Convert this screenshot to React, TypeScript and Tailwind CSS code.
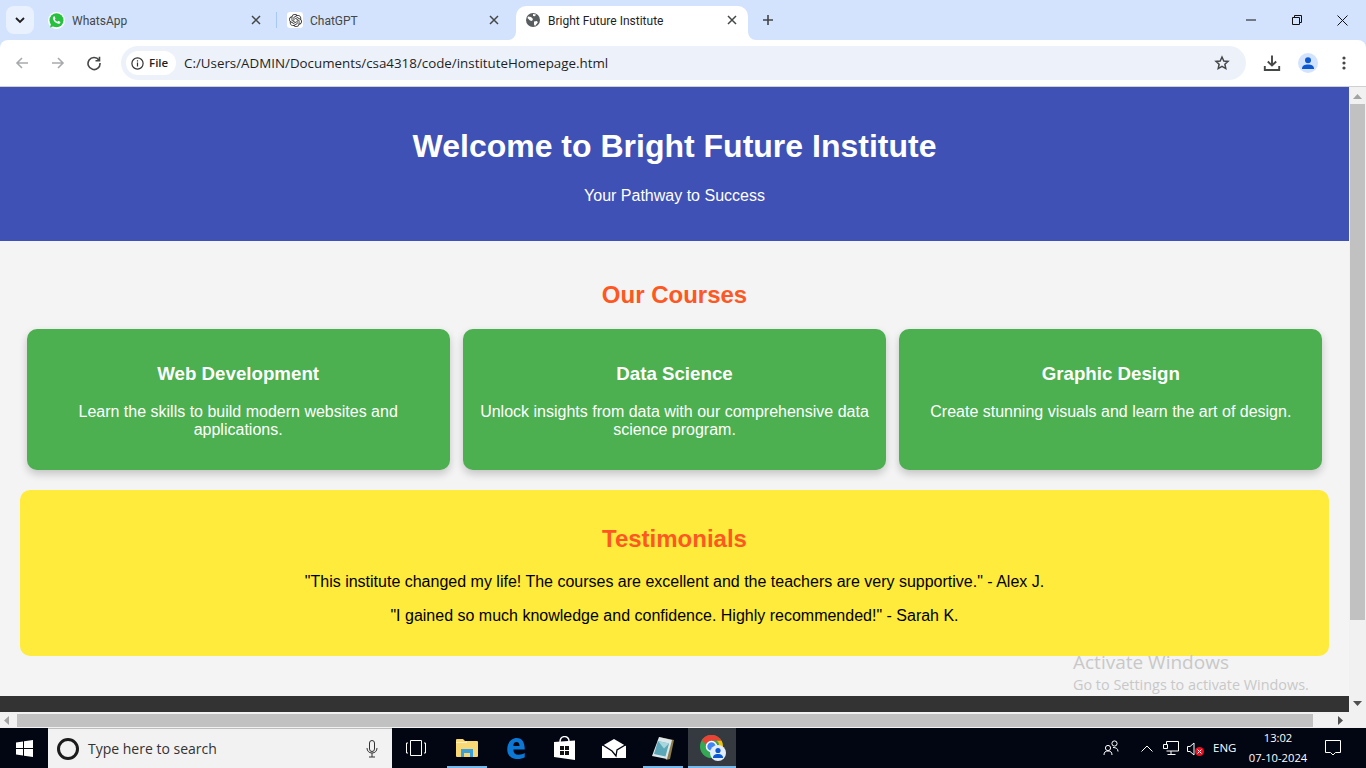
import React from "react";
import { SiOpenai } from "react-icons/si";

const ui = "font-['Open_Sans','Noto_Sans',sans-serif]";
const chrome = "font-['Roboto','Noto_Sans',sans-serif]";

function X({ className = "" }: { className?: string }) {
  return (
    <svg width="10" height="10" viewBox="0 0 10 10" className={className}>
      <path d="M1 1l8 8M9 1l-8 8" stroke="#444746" strokeWidth="1.5" fill="none" />
    </svg>
  );
}

function TabBar() {
  return (
    <div className={`flex h-10 shrink-0 bg-[#d3e3fd] pt-1.5 ${chrome}`}>
      <div className="ml-[6px] flex h-[28px] w-[28px] items-center justify-center rounded-lg bg-[#e9f1fe]">
        <svg width="10" height="7" viewBox="0 0 10 7"><path d="M1 1l4 4 4-4" stroke="#1f1f1f" strokeWidth="1.8" fill="none" /></svg>
      </div>
      <div className="ml-[14px] flex h-7 w-[214px] items-center">
        <svg width="17" height="17" viewBox="0 0 17 17">
          <circle cx="8.500" cy="8.500" r="8.500" fill="#fff" />
          <circle cx="8.500" cy="8.300" r="7" fill="#25c13f" />
          <path d="M2 15.500l1.200-4.500 3 3z" fill="#25c13f" />
          <path d="M6 4.300c.4 0 .6 0 .8.500l.6 1.400c.1.200 0 .4-.1.500l-.5.700c.6 1.100 1.500 1.900 2.600 2.400l.7-.7c.2-.2.4-.2.6-.1l1.400.7c.3.2.4.4.3.700-.2 1-1.100 1.500-2 1.400-2.800-.4-5-2.600-5.500-5.200-.1-.9.300-1.800 1.100-2.300z" fill="#fff" />
        </svg>
        <span className="ml-[7px] mt-px text-[12px] text-[#444746]">WhatsApp</span>
        <X className="ml-auto mr-[1px]" />
      </div>
      <div className="ml-[14px] mt-1.5 h-4 w-px bg-[#a8c7fa]" />
      <div className="ml-[10px] flex h-7 w-[213px] items-center">
        <div className="flex h-4 w-4 items-center justify-center rounded-[3px] bg-white">
          <SiOpenai className="text-[#333]" size={13} />
        </div>
        <span className="ml-[7px] mt-px text-[12px] text-[#444746]">ChatGPT</span>
        <X className="ml-auto mr-[1px]" />
      </div>
      <div className="relative ml-[16px] flex h-[34px] w-[232px] items-center rounded-t-[10px] bg-white pb-1.5 pl-[9px] pr-[11px]">
        <svg width="8" height="8" viewBox="0 0 8 8" className="absolute bottom-0 left-[-8px]"><path d="M8 0v8H0a8 8 0 0 0 8-8z" fill="#fff" /></svg>
        <svg width="8" height="8" viewBox="0 0 8 8" className="absolute bottom-0 right-[-8px]"><path d="M0 0v8h8a8 8 0 0 1-8-8z" fill="#fff" /></svg>
        <svg width="14" height="14" viewBox="0 0 14 14" className="ml-px">
          <circle cx="7" cy="7" r="7" fill="#5a5d60" />
          <path d="M2 3.500l3 .5 2 2-1 2-2-.5-2.500-2.500zM8 8.500l3-.5.800 1.500L9 13l-1-1.500zM7 1l3 .5-1 1.800L7 3z" fill="#fff" />
        </svg>
        <span className="ml-2 mt-px text-[12px] text-[#1f1f1f]">Bright Future Institute</span>
        <X className="ml-auto" />
      </div>
      <svg width="12" height="12" viewBox="0 0 12 12" className="ml-[14px] mt-2"><path d="M6 1v10M1 6h10" stroke="#444" strokeWidth="1.600" /></svg>
      <div className="ml-auto flex h-7 items-center">
        <svg width="10" height="10" viewBox="0 0 10 10"><path d="M0 5h10" stroke="#111" strokeWidth="1" /></svg>
        <svg width="10" height="10" viewBox="0 0 10 10" className="ml-[36px]">
          <path d="M.5 2.500h7v7h-7zM2.500 2.500v-2h7v7h-2" stroke="#111" fill="none" />
        </svg>
        <svg width="11" height="11" viewBox="0 0 11 11" className="ml-[35px] mr-[18px]">
          <path d="M.5.500l10 10M10.500.500l-10 10" stroke="#111" fill="none" />
        </svg>
      </div>
    </div>
  );
}

function Toolbar() {
  return (
    <div className={`flex h-[47px] shrink-0 items-center rounded-t-[8px] border-b border-[#d0d0d0] bg-white ${ui}`}>
      <svg width="16" height="16" viewBox="0 0 16 16" className="ml-[14px]"><path d="M14 8H3M8 3L3 8l5 5" stroke="#a8abad" strokeWidth="1.600" fill="none" /></svg>
      <svg width="16" height="16" viewBox="0 0 16 16" className="ml-[20px]"><path d="M2 8h11M8 3l5 5-5 5" stroke="#a8abad" strokeWidth="1.600" fill="none" /></svg>
      <svg width="16" height="16" viewBox="0 0 16 16" className="ml-[20px]"><path d="M13 5.200A6 6 0 1 0 14 8M13.500 1.800v4h-4" stroke="#444746" strokeWidth="1.600" fill="none" /></svg>
      <div className="ml-[19px] flex h-[34px] w-[1125px] items-center rounded-full bg-[#edf2fa] pl-[5px]">
        <div className="flex h-6 w-[50px] items-center rounded-full bg-white pl-[5px]">
          <svg width="13" height="13" viewBox="0 0 13 13"><circle cx="6.500" cy="6.500" r="5.600" stroke="#333" strokeWidth="1.200" fill="none" /><path d="M6.500 5.600v4M6.500 3.200v1.300" stroke="#333" strokeWidth="1.200" /></svg>
          <span className="ml-[5px] text-[11.500px] font-semibold text-[#1f1f1f]">File</span>
        </div>
        <span className="ml-2 mt-px text-[13.350px] text-[#1f1f1f]">C:/Users/ADMIN/Documents/csa4318/code/instituteHomepage.html</span>
        <svg width="16" height="16" viewBox="0 0 24 24" className="ml-auto mr-4"><path d="M12 3l2.700 6 6.400.600-4.800 4.300 1.400 6.400L12 17l-5.700 3.300 1.400-6.400L2.900 9.600 9.300 9z" stroke="#444746" strokeWidth="2.200" fill="none" /></svg>
      </div>
      <svg width="18" height="18" viewBox="0 0 18 18" className="ml-[17px]"><path d="M9 1.500v10M4.800 7.500L9 11.500l4.200-4M1.800 12v4h14.400v-4" stroke="#444746" strokeWidth="1.900" fill="none" /></svg>
      <div className="ml-[17px] flex h-5 w-5 items-center justify-center rounded-full bg-[#d3e3fd]">
        <svg width="14" height="14" viewBox="0 0 14 14"><circle cx="7" cy="4.300" r="3" fill="#0b57d0" /><path d="M1 13c0-3.500 2.500-4.500 6-4.500s6 1 6 4.500z" fill="#0b57d0" /></svg>
      </div>
      <svg width="4" height="14" viewBox="0 0 4 14" className="ml-[24px]"><circle cx="2" cy="2" r="1.600" fill="#444746" /><circle cx="2" cy="7" r="1.600" fill="#444746" /><circle cx="2" cy="12" r="1.600" fill="#444746" /></svg>
    </div>
  );
}

const courses = [
  ["Web Development", "Learn the skills to build modern websites and applications."],
  ["Data Science", "Unlock insights from data with our comprehensive data science program."],
  ["Graphic Design", "Create stunning visuals and learn the art of design."],
];

function Page() {
  return (
    <div className="relative min-w-0 flex-1 overflow-hidden bg-[#f4f4f4] font-['Liberation_Sans',sans-serif] leading-[normal]">
      <header className="bg-[#3f51b5] p-5 text-center text-white">
        <h1 className="my-[21.44px] text-[32px] leading-[normal] font-bold">Welcome to Bright Future Institute</h1>
        <p className="my-4 text-[16px] leading-[normal]">Your Pathway to Success</p>
      </header>
      <section className="p-5">
        <h2 className="my-[19.92px] text-center text-[24px] leading-[normal] font-bold text-[#ff5722]">Our Courses</h2>
        <div className="flex justify-around">
          {courses.map(([t, d]) => (
            <div key={t} className="w-[423px] rounded-[10px] bg-[#4caf50] p-[15px] text-center text-white shadow-[0_4px_8px_rgba(0,0,0,0.2)]">
              <h3 className="mt-[19.2px] mb-[18.24px] text-[18.72px] leading-[normal] font-bold">{t}</h3>
              <p className="my-4 text-[16px] leading-[normal]">{d}</p>
            </div>
          ))}
        </div>
      </section>
      <section className="mx-5 rounded-[10px] bg-[#ffeb3b] p-[15px] text-center text-black">
        <h2 className="my-[19.92px] text-[24px] leading-[normal] font-bold text-[#ff5722]">Testimonials</h2>
        <p className="my-4 text-[16px] leading-[normal]">"This institute changed my life! The courses are excellent and the teachers are very supportive." - Alex J.</p>
        <p className="my-4 text-[16px] leading-[normal]">"I gained so much knowledge and confidence. Highly recommended!" - Sarah K.</p>
      </section>
      <footer className="mt-10 h-[50px] bg-[#333]" />
      <div className={`absolute left-[1073px] top-[562px] text-[#c8c8c8] ${ui}`}>
        <div className="text-[19px] leading-[26px]">Activate Windows</div>
        <div className="text-[14.400px] leading-[20px]">Go to Settings to activate Windows.</div>
      </div>
    </div>
  );
}

function VBar() {
  return (
    <div className="flex w-[17px] shrink-0 flex-col items-center bg-[#f1f1f1]">
      <svg width="9" height="5" viewBox="0 0 9 5" className="mt-[7px]"><path d="M4.500 0L9 5H0z" fill="#a3a3a3" /></svg>
      <div className="mt-[5px] h-[516px] w-[15px] bg-[#c1c1c1]" />
      <svg width="9" height="5" viewBox="0 0 9 5" className="mt-auto mb-[6px]"><path d="M0 0h9L4.500 5z" fill="#505050" /></svg>
    </div>
  );
}

function HBar() {
  return (
    <div className="flex h-4 shrink-0 items-center bg-[#f1f1f1]">
      <svg width="5" height="9" viewBox="0 0 5 9" className="ml-1"><path d="M5 0v9L0 4.500z" fill="#a3a3a3" /></svg>
      <div className="ml-2 h-[13px] w-[1296px] bg-[#c1c1c1]" />
      <svg width="5" height="9" viewBox="0 0 5 9" className="ml-[25px]"><path d="M0 0v9l5-4.500z" fill="#505050" /></svg>
    </div>
  );
}

function Taskbar() {
  return (
    <div className={`flex h-10 shrink-0 items-center bg-[#020612] text-white ${ui}`}>
      <div className="flex w-12 justify-center">
        <svg width="17" height="17" viewBox="0 0 17 17"><path d="M0 2.500l7-1v6.500H0zM8 1.300l9-1.300v8H8zM0 9h7v6.500l-7-1zM8 9h9v8l-9-1.300z" fill="#fff" /></svg>
      </div>
      <div className="flex h-10 w-[344px] items-center border-t border-[#bdbdbd] bg-[#f2f2f2] pl-[9px]">
        <div className="h-[22px] w-[22px] rounded-full border-[3px] border-[#1c1c1c]" />
        <span className="ml-[9px] text-[14px] text-[#333]">Type here to search</span>
        <svg width="12" height="18" viewBox="0 0 12 18" className="ml-auto mr-[14px]"><rect x="3.500" y="0.500" width="5" height="11" rx="2.500" stroke="#333" fill="none" /><path d="M1 8c0 3 2 5 5 5s5-2 5-5M6 13v4M3 17h6" stroke="#333" fill="none" /></svg>
      </div>
      <div className="flex w-12 justify-center">
        <svg width="20" height="16" viewBox="0 0 20 16"><path d="M4.500.500h11v15h-11zM2 3H.5v10H2M18 3h1.500v10H18" stroke="#fff" fill="none" /></svg>
      </div>
      <div className="relative ml-[7px] flex h-10 w-10 items-center justify-center">
        <svg width="22" height="18" viewBox="0 0 22 18"><path d="M0 1q0-1 1-1h6l2 2h12q1 0 1 1v14q0 1-1 1H1q-1 0-1-1z" fill="#f8d775" /><path d="M0 3h9l2-1v2H0z" fill="#fdf0bd" /><path d="M5 10h12v8h-3v-4H8v4H5z" fill="#3aa0dc" /></svg>
        <div className="absolute bottom-0 left-0 h-0.5 w-10 bg-[#76b9ed]" />
      </div>
      <svg width="20" height="21" viewBox="0 0 22 24" className="ml-[19px]"><path d="M1 13C1 5 6 0 12 0c6 0 9 5 9 13H8c0 4 2 6 6 6 2.500 0 5-.8 7-2v5c-2 1.500-5 2-8 2-7 0-12-4-12-11zm7-4h7c0-3-1-4.500-3.500-4.500S8 6 8 9z" fill="#0a78d4" /></svg>
      <svg width="21" height="24" viewBox="0 0 21 24" className="ml-[28px]"><path d="M0 6l21-1.500V24L0 21z" fill="#fff" /><path d="M6 6c0-7 9-7 9-1" stroke="#fff" strokeWidth="1.500" fill="none" /><path d="M6 10h4v4H6zM11 10h4v4h-4zM6 15h4v4H6zM11 15h4v4h-4z" fill="#111" /></svg>
      <svg width="24" height="19" viewBox="0 0 24 19" className="ml-[27px]"><path d="M0 7l12-7 12 7v12H0z" fill="#fff" /><path d="M0 5.500l10 6.500 4 5 1-6 9-5.500" stroke="#020612" strokeWidth="1.300" fill="none" /></svg>
      <div className="relative ml-[17px] flex h-10 w-10 items-center justify-center">
        <svg width="22" height="23" viewBox="0 0 22 23"><path d="M7 0l15 3-4 19-4 1z" fill="#8d7b4a" /><path d="M7 0l13 3-5 19L0 19z" fill="#dce7ea" /><path d="M6 4l11 2.500-3.500 13L2 17z" fill="#5ba7b8" /><path d="M6 4l11 2.500-5 5z" fill="#a8d6df" /></svg>
        <div className="absolute bottom-0 left-0 h-0.5 w-10 bg-[#76b9ed]" />
      </div>
      <div className="relative ml-[5px] flex h-10 w-12 items-center justify-center bg-[#343a40]">
        <svg width="26" height="26" viewBox="0 0 26 26" className="ml-[2px]">
          <circle cx="11.500" cy="11.500" r="11.500" fill="#34a853" />
          <path d="M11.500 0a11.500 11.500 0 0 1 10 5.800H11.500a5.700 5.700 0 0 0-5.300 3.700L1.800 5.200A11.500 11.500 0 0 1 11.500 0z" fill="#ea4335" />
          <path d="M21.500 5.800A11.500 11.500 0 0 1 12 23l5-8.500a5.700 5.700 0 0 0 0-8.700z" fill="#fbbc04" />
          <circle cx="11.500" cy="11.500" r="5" fill="#4285f4" stroke="#fff" strokeWidth="1.500" />
          <circle cx="18" cy="18" r="8" fill="#e3ecfb" />
          <circle cx="18" cy="15.500" r="2.600" fill="#0b57d0" />
          <path d="M13 23c0-3 2-4 5-4s5 1 5 4z" fill="#0b57d0" />
        </svg>
        <div className="absolute bottom-0 left-0 h-0.5 w-12 bg-[#76b9ed]" />
      </div>
      <div className="ml-auto flex items-center">
        <svg width="16" height="16" viewBox="0 0 16 16"><circle cx="5" cy="8" r="2.600" stroke="#fff" fill="none" /><circle cx="11.500" cy="3.500" r="2.600" stroke="#fff" fill="none" /><path d="M1 15c0-3 1.500-4 4-4s4 1 4 4M10 7.500c3 0 5 1 5 4" stroke="#fff" fill="none" /></svg>
        <svg width="12" height="7" viewBox="0 0 12 7" className="ml-[22px]"><path d="M.5 6.500L6 1l5.500 5.500" stroke="#fff" fill="none" /></svg>
        <svg width="16" height="14" viewBox="0 0 16 14" className="ml-[10px]"><path d="M3.500 3V.5h12v9.500H3.500M8 10v3M4.500 13.500h8M.5 3.500h4v4h-4z" stroke="#fff" fill="none" /></svg>
        <div className="relative ml-[8px] h-4 w-[18px]">
          <svg width="10" height="14" viewBox="0 0 10 14" className="absolute left-0 top-0.5"><path d="M.5 4.500h2.500L7 1v12L3 9.500H.5z" stroke="#fff" fill="none" /></svg>
          <div className="absolute left-[8px] top-[7px] flex h-[9px] w-[9px] items-center justify-center rounded-full bg-[#e81123]">
            <svg width="5" height="5" viewBox="0 0 5 5"><path d="M.5.500l4 4M4.500.500l-4 4" stroke="#fff" /></svg>
          </div>
        </div>
        <span className="ml-[8px] w-[36px] text-[11.500px]">ENG</span>
        <div className="flex w-[58px] flex-col items-center whitespace-nowrap text-[11.200px] leading-[20px]">
          <span>13:02</span>
          <span>07-10-2024</span>
        </div>
        <svg width="16" height="16" viewBox="0 0 16 16" className="ml-[18px] mr-[25px]"><path d="M.5.500h15v12h-5l-2.500 2.500-2.500-2.500h-5z" stroke="#fff" fill="none" /></svg>
      </div>
    </div>
  );
}

export default function App() {
  return (
    <div className={`flex h-[768px] w-[1366px] flex-col overflow-hidden bg-[#d3e3fd] ${ui}`}>
      <TabBar />
      <Toolbar />
      <div className="flex min-h-0 flex-1">
        <Page />
        <VBar />
      </div>
      <HBar />
      <Taskbar />
    </div>
  );
}
